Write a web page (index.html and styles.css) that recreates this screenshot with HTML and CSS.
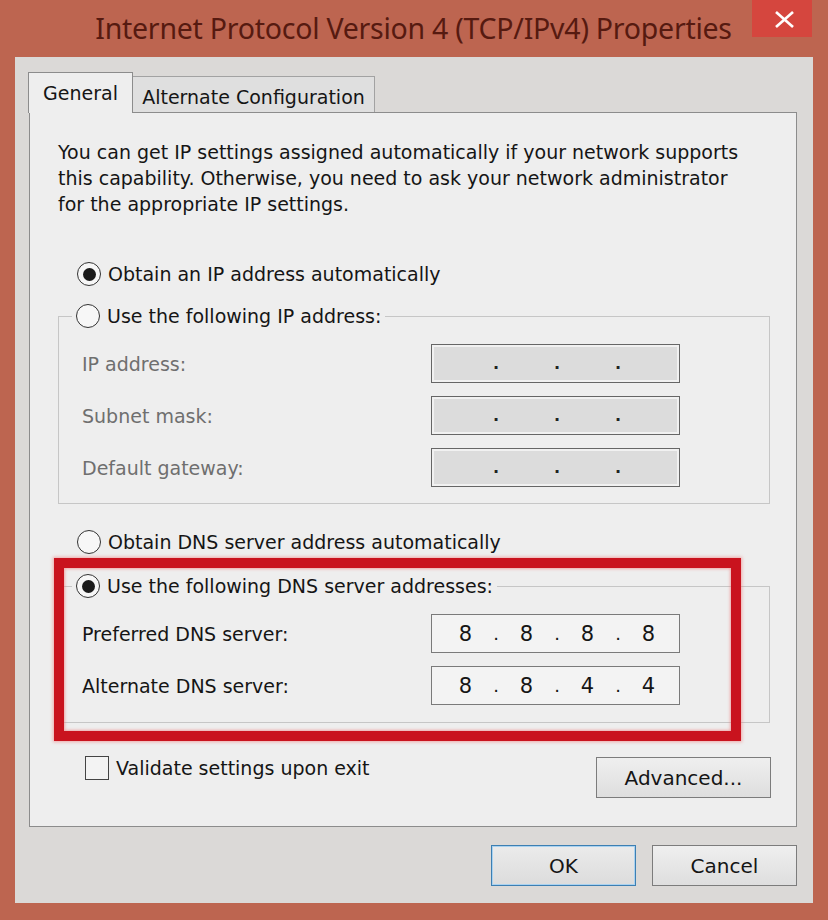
FILE: index.html
```html
<!DOCTYPE html>
<html lang="en">
<head>
    <meta charset="UTF-8">
    <meta name="viewport" content="width=device-width, initial-scale=1.0">
    <title>Internet Protocol Version 4 (TCP/IPv4) Properties</title>
    <link rel="stylesheet" href="styles.css">
</head>
<body>
    <div class="window">
        <div class="titlebar">
            <h1 class="title">Internet Protocol Version 4 (TCP/IPv4) Properties</h1>
            <div class="close">
                <svg width="60" height="37" viewBox="0 0 60 37">
                    <line x1="24" y1="12" x2="41" y2="27" stroke="#fff" stroke-width="2.6"/>
                    <line x1="41" y1="12" x2="24" y2="27" stroke="#fff" stroke-width="2.6"/>
                </svg>
            </div>
        </div>

        <div class="client">
            <div class="tabs">
                <div class="tab active">General</div>
                <div class="tab">Alternate Configuration</div>
            </div>

            <div class="panel">
                <p class="intro">You can get IP settings assigned automatically if your network supports this capability. Otherwise, you need to ask your network administrator for the appropriate IP settings.</p>

                <label class="radio first"><span class="circle checked"></span>Obtain an IP address automatically</label>

                <fieldset class="group ip-group">
                    <legend><label class="radio"><span class="circle"></span>Use the following IP address:</label></legend>
                    <div class="row disabled">
                        <span class="label">IP address:</span>
                        <div class="ip off"><span></span><i>.</i><span></span><i>.</i><span></span><i>.</i><span></span></div>
                    </div>
                    <div class="row disabled">
                        <span class="label">Subnet mask:</span>
                        <div class="ip off"><span></span><i>.</i><span></span><i>.</i><span></span><i>.</i><span></span></div>
                    </div>
                    <div class="row disabled">
                        <span class="label">Default gateway:</span>
                        <div class="ip off"><span></span><i>.</i><span></span><i>.</i><span></span><i>.</i><span></span></div>
                    </div>
                </fieldset>

                <label class="radio dns-auto"><span class="circle"></span>Obtain DNS server address automatically</label>

                <fieldset class="group dns-group">
                    <legend><label class="radio"><span class="circle checked"></span>Use the following DNS server addresses:</label></legend>
                    <div class="row">
                        <span class="label">Preferred DNS server:</span>
                        <div class="ip"><span>8</span><i>.</i><span>8</span><i>.</i><span>8</span><i>.</i><span>8</span></div>
                    </div>
                    <div class="row">
                        <span class="label">Alternate DNS server:</span>
                        <div class="ip"><span>8</span><i>.</i><span>8</span><i>.</i><span>4</span><i>.</i><span>4</span></div>
                    </div>
                </fieldset>

                <div class="bottom">
                    <label class="check"><span class="box"></span>Validate settings upon exit</label>
                    <button class="btn advanced">Advanced...</button>
                </div>

                <div class="highlight"></div>
            </div>

            <div class="actions">
                <button class="btn default">OK</button>
                <button class="btn">Cancel</button>
            </div>
        </div>
    </div>
</body>
</html>
```

FILE: styles.css
```css
body {
    margin: 0;
    background-color: #bd6550;
    font-family: "DejaVu Sans", sans-serif;
    font-size: 19px;
    color: #151515;
}
.window {
    width: 828px;
    height: 920px;
    background-color: #bd6550;
}
.titlebar {
    height: 57px;
    padding: 0 16px 0 15px;
    display: grid;
    grid-template-columns: 1fr auto 1fr;
}
.title {
    grid-column: 2;
    margin: 0 0 2px 0;
    align-self: center;
    font-family: "Noto Sans", sans-serif;
    font-weight: 400;
    font-size: 28.5px;
    color: #561a10;
    letter-spacing: -0.25px;
    white-space: nowrap;
}
.close {
    grid-column: 3;
    justify-self: end;
    align-self: start;
    width: 60px;
    height: 37px;
    background-color: #d5463e;
}
.close svg {
    display: block;
}
.client {
    margin: 0 15px 0 15px;
    padding: 15px 16px 16px 14px;
    background-color: #dbd9d7;
    height: 815px;
}
.tabs {
    display: flex;
    align-items: flex-end;
    position: relative;
    z-index: 2;
    margin: 0 0 -1px -1px;
}
.tab {
    margin-bottom: 1px;
    padding-top: 4px;
    display: flex;
    align-items: center;
    justify-content: center;
    width: 242px;
    height: 36px;
    box-sizing: border-box;
    background-color: #dfdfdf;
    border: 1px solid #a2a2a2;
    border-bottom: none;
    border-left: none;
    white-space: nowrap;
}
.tab.active {
    width: 105px;
    height: 41px;
    margin-bottom: 0;
    padding-top: 0;
    background-color: #eeeeee;
    border: 1px solid #8c8c8c;
    border-bottom: none;
}
.panel {
    position: relative;
    background-color: #eeeeee;
    border: 1px solid #8c8c8c;
    padding: 26px 24px 28px 28px;
}
.intro {
    margin: 0;
    line-height: 26px;
    width: 700px;
}
.radio {
    display: flex;
    align-items: center;
    height: 26px;
    white-space: nowrap;
}
.radio.first,
.radio.dns-auto {
    padding-left: 19px;
}
.radio.first {
    margin-top: 44px;
}
.radio.dns-auto {
    margin-top: 25px;
}
.circle {
    width: 24px;
    height: 24px;
    box-sizing: border-box;
    border: 1.5px solid #333;
    border-radius: 50%;
    background-color: #f7f7f7;
    margin-right: 7px;
    display: flex;
    align-items: center;
    justify-content: center;
}
.circle.checked::after {
    content: "";
    width: 13px;
    height: 13px;
    border-radius: 50%;
    background-color: #1b1b1b;
}
.group {
    margin: 0;
    min-width: 0;
    width: 712px;
    box-sizing: border-box;
    border: 1px solid #c6c6c6;
    padding: 15px 0 16px 13px;
}
.ip-group {
    margin-top: 16px;
}
.dns-group {
    margin-top: 18px;
    padding-bottom: 17px;
}
.group legend {
    padding: 0 4px;
}
.row {
    display: grid;
    grid-template-columns: 349px 249px;
    align-items: center;
    height: 39px;
    margin-left: 10px;
}
.row + .row {
    margin-top: 13px;
}
.row.disabled .label {
    color: #6f6f6f;
}
.ip {
    height: 39px;
    box-sizing: border-box;
    border: 1px solid #7a7a7a;
    background-color: #f3f3f3;
    display: grid;
    grid-template-columns: 53px 8px 53px 8px 53px 8px 53px;
    padding-left: 7px;
    align-items: center;
    font-size: 21px;
}
.ip span {
    text-align: center;
}
.ip i {
    font-style: normal;
    text-align: center;
    font-size: 18px;
}
.ip.off {
    border-color: #666;
    background-color: #dcdcdc;
    box-shadow: inset 0 0 0 2px #f1f1f1;
}
.ip.off i {
    font-size: 16px;
    font-weight: bold;
    color: #222;
}
.bottom {
    margin-top: 33px;
    display: flex;
    justify-content: space-between;
    align-items: flex-start;
    width: 712px;
}
.check {
    display: flex;
    align-items: center;
    height: 24px;
    padding-left: 27px;
}
.box {
    width: 24px;
    height: 24px;
    box-sizing: border-box;
    border: 1.5px solid #444;
    background-color: #f3f3f3;
    margin-right: 7px;
}
.btn {
    width: 145px;
    height: 41px;
    border: 1px solid #7c7c7c;
    background: linear-gradient(#efefef, #dedede);
    font-family: "DejaVu Sans", sans-serif;
    font-size: 20px;
    color: #151515;
    padding: 0;
}
.btn.advanced {
    width: 175px;
    margin-top: 1px;
    margin-right: -1px;
}
.btn.default {
    border-color: #3d7fb2;
    box-shadow: inset 0 0 0 1px #a9d2f0;
    background: linear-gradient(#ebebeb, #dcdcdc);
}
.actions {
    margin-top: 18px;
    display: flex;
    justify-content: flex-end;
    gap: 16px;
}
.highlight {
    position: absolute;
    left: 24px;
    top: 445px;
    width: 687px;
    height: 183px;
    box-sizing: border-box;
    border: 10px solid #c9131e;
    box-shadow: 0 0 3px 1px rgba(240, 120, 120, 0.6), inset 0 0 3px 1px rgba(240, 120, 120, 0.6);
}
```
